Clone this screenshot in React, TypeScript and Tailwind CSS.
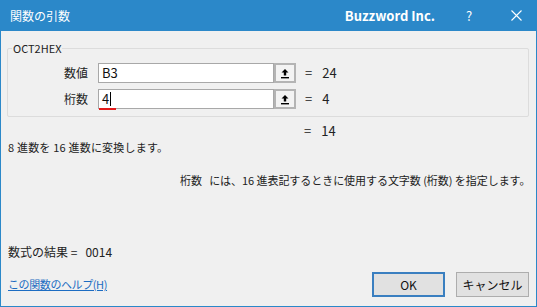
import React from 'react';

const font = { fontFamily: '"Noto Sans CJK JP", "Noto Sans", sans-serif' };

const RefButton: React.FC = () => (
  <div className="w-[22px] h-[20px] border-2 border-[#b4b4b4] bg-[#f3f3f3] flex items-center justify-center">
    <svg width="10" height="11" viewBox="0 0 10 11">
      <path d="M5 1 L1.5 4.5 H3.8 V7.5 H6.2 V4.5 H8.5 Z" fill="#000" />
      <rect x="1" y="9" width="8" height="1.4" fill="#000" />
    </svg>
  </div>
);

const ArgRow: React.FC<{ label: string; value: string; result: string; caret?: boolean }> = ({ label, value, result, caret }) => (
  <div className="flex items-center h-[20px]">
    <div className="w-[82px] text-right pr-[10px] text-[12px] text-[#222]">{label}</div>
    <div className="relative w-[176px] h-[20px] bg-white border border-[#a8a8a8] flex items-center pl-[3px] text-[13px] text-[#111]">
      <span>{value}</span>
      {caret && <span className="w-px h-[14px] bg-black ml-[1px]" />}
      {caret && <span className="absolute left-0 -bottom-[2px] w-[17px] h-[2px] bg-[#e41b1b]" />}
    </div>
    <RefButton />
    <div className="ml-[9px] text-[13px] text-[#222]">=</div>
    <div className="ml-[10px] text-[13px] text-[#222]">{result}</div>
  </div>
);

export default function App() {
  return (
    <div style={font} className="w-[537px] h-[307px] bg-[#f0f0f0] border border-t-0 border-[#2b88c9] flex flex-col overflow-hidden">
      {/* Title bar */}
      <div className="h-[31px] bg-[#2b88c9] flex items-center text-white shrink-0">
        <div className="pl-[9px] text-[12px]">関数の引数</div>
        <div className="ml-auto text-[13px] font-bold">Buzzword Inc.</div>
        <div className="ml-[24px] w-[20px] text-center text-[13px]">?</div>
        <div className="ml-[27px] mr-[10px] w-[20px] flex items-center justify-center">
          <svg width="11" height="11" viewBox="0 0 11 11">
            <path d="M0.5 0.5 L10.5 10.5 M10.5 0.5 L0.5 10.5" stroke="#fff" strokeWidth="1.1" />
          </svg>
        </div>
      </div>

      <div className="flex-1 flex flex-col px-[6px] text-[#222]">
        {/* Group box */}
        <div className="relative mt-[17px] mr-[1px] h-[69px] border border-[#dcdcdc] rounded-[2px]">
          <div className="absolute -top-[9px] left-[4px] px-[1px] bg-[#f0f0f0] text-[11px] leading-[16px]">OCT2HEX</div>
          <div className="flex flex-col gap-[6px] pt-[14px] pl-[8px]">
            <ArgRow label="数値" value="B3" result="24" />
            <ArgRow label="桁数" value="4" result="4" caret />
          </div>
        </div>

        <div className="flex h-[16px] leading-[16px] mt-[6px] text-[13px]">
          <span className="ml-[297px]">=</span>
          <span className="ml-[10px]">14</span>
        </div>

        <div className="h-[16px] leading-[16px] pl-[1px] text-[11px] tracking-[0.2px]">8 進数を 16 進数に変換します。</div>

        <div className="h-[16px] leading-[16px] mt-[17px] pl-[173px] text-[11px] tracking-[-0.05px] whitespace-nowrap">
          桁数&nbsp;&nbsp;&nbsp;には、16 進表記するときに使用する文字数 (桁数) を指定します。
        </div>

        <div className="h-[16px] leading-[16px] mt-[56px] pl-[1px] text-[12px]">数式の結果 =&nbsp;&nbsp;&nbsp;0014</div>

        <div className="flex items-center mt-[12px]">
          <a className="pl-[1px] text-[11px] tracking-[-0.4px] text-[#1c6cc2] underline">この関数のヘルプ(H)</a>
          <button className="ml-auto w-[73px] h-[25px] border-2 border-[#3a7fc0] bg-[#e1e1e1] text-[12px] text-[#111]">OK</button>
          <button className="ml-[11px] mr-[1px] w-[73px] h-[25px] border border-[#adadad] bg-[#e1e1e1] text-[12px] text-[#111]">キャンセル</button>
        </div>
      </div>
    </div>
  );
}
